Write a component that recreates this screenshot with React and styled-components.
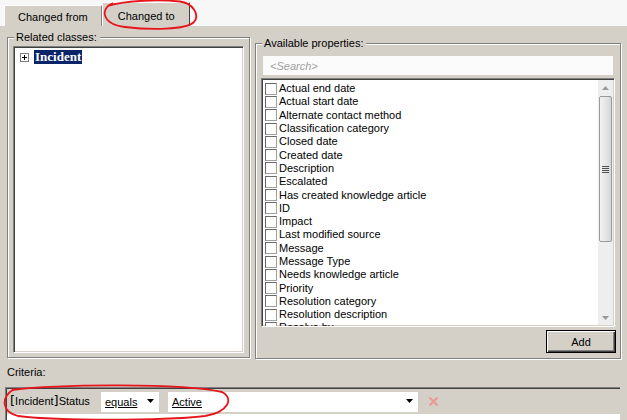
import styled, { createGlobalStyle } from "styled-components"

const GlobalStyle = createGlobalStyle`
  html, body {
    margin: 0;
    padding: 0;
    background: #ffffff;
  }
  body {
    font-family: "Liberation Sans", Arial, sans-serif;
    font-size: 11px;
    color: #000;
  }
`

const properties = [
  "Actual end date",
  "Actual start date",
  "Alternate contact method",
  "Classification category",
  "Closed date",
  "Created date",
  "Description",
  "Escalated",
  "Has created knowledge article",
  "ID",
  "Impact",
  "Last modified source",
  "Message",
  "Message Type",
  "Needs knowledge article",
  "Priority",
  "Resolution category",
  "Resolution description",
  "Resolve by",
]

const DropArrow = () => (
  <svg width="8" height="5" viewBox="0 0 8 5">
    <path d="M0 0 H7 L3.5 4 Z" fill="#000" />
  </svg>
)

const App = () => {
  return (
    <Wrapper>
      <GlobalStyle />
      <TabStrip>
        <Tab>Changed from</Tab>
        <Tab $active>Changed to</Tab>
      </TabStrip>

      <Panel>
        <TopRow>
          <GroupBox $width={243} $height={321} $top={11}>
            <Legend>Related classes:</Legend>
            <Sunken $grow>
              <TreeRow>
                <Expander>
                  <svg width="7" height="7" viewBox="0 0 7 7">
                    <path d="M1 3.5 H6 M3.5 1 V6" stroke="#000" strokeWidth="1" />
                  </svg>
                </Expander>
                <Selected>Incident</Selected>
              </TreeRow>
            </Sunken>
          </GroupBox>

          <GroupBox $width={366} $height={316} $top={17}>
            <Legend>Available properties:</Legend>
            <SearchBox>&lt;Search&gt;</SearchBox>
            <Sunken $height={249} $row>
              <PropList>
                {properties.map((name) => (
                  <PropRow key={name}>
                    <Check />
                    <span>{name}</span>
                  </PropRow>
                ))}
              </PropList>
              <ScrollBar>
                <ScrollArrow>
                  <svg width="7" height="4" viewBox="0 0 7 4">
                    <path d="M0 4 H7 L3.5 0 Z" fill="#9a9a9a" />
                  </svg>
                </ScrollArrow>
                <Thumb>
                  <Grip />
                </Thumb>
                <ScrollTrack />
                <ScrollArrow>
                  <svg width="7" height="4" viewBox="0 0 7 4">
                    <path d="M0 0 H7 L3.5 4 Z" fill="#9a9a9a" />
                  </svg>
                </ScrollArrow>
              </ScrollBar>
            </Sunken>
            <ButtonRow>
              <Button>Add</Button>
            </ButtonRow>
          </GroupBox>
        </TopRow>

        <CriteriaLabel>Criteria:</CriteriaLabel>

        <CriteriaBox>
          <CriteriaRow>
            <FieldName>
              <Bracket>[</Bracket>Incident<Bracket>]</Bracket>Status
            </FieldName>
            <Combo $width={58}>
              <ComboText>equals</ComboText>
              <DropArrow />
            </Combo>
            <Combo $width={250}>
              <ComboText>Active</ComboText>
              <DropArrow />
            </Combo>
            <RemoveIcon>
              <svg width="11" height="11" viewBox="0 0 11 11">
                <path d="M1.5 1.5 L9.5 9.5 M9.5 1.5 L1.5 9.5" stroke="#eb9a9a" strokeWidth="2.2" />
              </svg>
            </RemoveIcon>
          </CriteriaRow>
        </CriteriaBox>
      </Panel>

      <Annotations width="627" height="420" viewBox="0 0 627 420">
        <path
          d="M113 3 C100 8, 101 24, 125 27 C150 30, 186 30, 194 22 C200 15, 193 3, 180 1.5 C160 -0.5, 126 0, 108 6"
          fill="none"
          stroke="#e8141b"
          strokeWidth="1.8"
        />
        <path
          d="M12 390 C60 384, 182 383, 222 392 C234 398, 229 412, 205 416 C160 421, 60 421, 18 416 C2 412, 0 398, 14 389"
          fill="none"
          stroke="#e8141b"
          strokeWidth="1.8"
        />
      </Annotations>
    </Wrapper>
  )
}
export default App

const Wrapper = styled.div`
  position: relative;
  width: 627px;
  height: 420px;
  overflow: hidden;
  display: flex;
  flex-direction: column;
  background: #ffffff;
`

const TabStrip = styled.div`
  height: 26px;
  background: #f7f7f7;
  display: flex;
  align-items: flex-end;
  padding-left: 4px;
`

const Tab = styled.div`
  box-sizing: border-box;
  height: ${(p) => (p.$active ? "24px" : "21px")};
  padding: ${(p) => (p.$active ? "2px 14px 0 15px" : "1px 13px 0 13px")};
  display: flex;
  align-items: center;
  background: #d4d0c8;
  border-top: 1px solid #ffffff;
  border-left: 1px solid #ffffff;
  border-right: 1px solid ${(p) => (p.$active ? "#404040" : "#808080")};
  color: #000;
`

const Panel = styled.div`
  flex: 1;
  width: 623px;
  background: #d4d0c8;
  border-right: 2px solid #5a5a5a;
  display: flex;
  flex-direction: column;
  padding-left: 7px;
  box-sizing: content-box;
`

const TopRow = styled.div`
  display: flex;
  align-items: flex-start;
  gap: 5px;
`

const GroupBox = styled.div`
  position: relative;
  box-sizing: border-box;
  width: ${(p) => p.$width}px;
  height: ${(p) => p.$height}px;
  margin-top: ${(p) => p.$top}px;
  border: 1px solid #808080;
  box-shadow: inset 1px 1px 0 #ffffff, 1px 1px 0 #ffffff;
  padding: 8px 5px 4px 5px;
  display: flex;
  flex-direction: column;
`

const Legend = styled.span`
  position: absolute;
  top: -7px;
  left: 6px;
  padding: 0 3px 0 2px;
  background: #d4d0c8;
  line-height: 13px;
  color: #000;
`

const Sunken = styled.div`
  box-sizing: border-box;
  ${(p) => (p.$grow ? "flex: 1;" : "")}
  ${(p) => (p.$height ? `height: ${p.$height}px;` : "")}
  display: flex;
  flex-direction: ${(p) => (p.$row ? "row" : "column")};
  background: #ffffff;
  border: 1px solid;
  border-color: #808080 #ffffff #ffffff #808080;
  box-shadow: inset 1px 1px 0 #404040, inset -1px -1px 0 #d4d0c8;
  padding: 2px;
  overflow: hidden;
`

const TreeRow = styled.div`
  display: flex;
  align-items: center;
  gap: 5px;
  padding: 1px 0 0 4px;
`

const Expander = styled.div`
  box-sizing: border-box;
  width: 9px;
  height: 9px;
  border: 1px solid #808080;
  background: #fff;
  display: flex;
  align-items: center;
  justify-content: center;
`

const Selected = styled.span`
  background: #0a246a;
  color: #ffffff;
  font-weight: bold;
  font-family: "Liberation Serif", "DejaVu Serif", serif;
  font-size: 13px;
  line-height: 14px;
  padding: 0 1px;
`

const SearchBox = styled.div`
  box-sizing: border-box;
  height: 19px;
  margin: 4px 2px 3px 2px;
  background: #fbfbfb;
  color: #a0a0a0;
  font-style: italic;
  display: flex;
  align-items: center;
  padding-left: 7px;
`

const PropList = styled.div`
  flex: 1;
  display: flex;
  flex-direction: column;
  padding-top: 1px;
  padding-left: 1px;
`

const PropRow = styled.div`
  height: 13.3px;
  flex-shrink: 0;
  display: flex;
  align-items: center;
  gap: 2px;
  white-space: nowrap;
  line-height: 13px;
`

const Check = styled.span`
  box-sizing: border-box;
  width: 12px;
  height: 12px;
  flex-shrink: 0;
  background: #ffffff;
  border: 1px solid;
  border-color: #6a6a6a #a0a0a0 #a0a0a0 #6a6a6a;
`

const ScrollBar = styled.div`
  width: 15px;
  display: flex;
  flex-direction: column;
  background: #eeeeee;
  margin: -1px -1px -1px 0;
`

const ScrollArrow = styled.div`
  height: 15px;
  display: flex;
  align-items: center;
  justify-content: center;
`

const Thumb = styled.div`
  box-sizing: border-box;
  height: 146px;
  margin: 1px 1px 0 1px;
  border: 1px solid #9a9a9a;
  border-radius: 2px;
  background: linear-gradient(90deg, #f2f2f2 0%, #e6e6e6 50%, #d6d6d6 100%);
  display: flex;
  align-items: center;
  justify-content: center;
`

const Grip = styled.div`
  width: 7px;
  height: 7px;
  background: repeating-linear-gradient(
    180deg,
    #505050 0px,
    #505050 1px,
    transparent 1px,
    transparent 2px
  );
`

const ScrollTrack = styled.div`
  flex: 1;
`

const ButtonRow = styled.div`
  display: flex;
  justify-content: flex-end;
  margin-top: 3px;
`

const Button = styled.button`
  box-sizing: border-box;
  width: 70px;
  height: 23px;
  margin-right: -1px;
  font-family: inherit;
  font-size: 11px;
  color: #000;
  background: #d4d0c8;
  border: 1px solid #000;
  box-shadow: inset 1px 1px 0 #ffffff, inset -1px -1px 0 #404040, inset -2px -2px 0 #808080;
  padding: 0;
`

const CriteriaLabel = styled.div`
  height: 28px;
  display: flex;
  align-items: center;
  padding-bottom: 3px;
  box-sizing: border-box;
`

const CriteriaBox = styled.div`
  flex: 1;
  margin-left: -2px;
  width: 615px;
  box-sizing: border-box;
  background: #ffffff;
  border-top: 1px solid #808080;
  border-left: 1px solid #808080;
  box-shadow: inset 1px 1px 0 #404040;
  padding: 1px 0 0 1px;
`

const CriteriaRow = styled.div`
  height: 25px;
  background: #d4d0c8;
  display: flex;
  align-items: center;
  padding-left: 3px;
`

const FieldName = styled.span`
  width: 91px;
  padding-bottom: 2px;
  font-size: 11px;
  color: #000;
`

const Bracket = styled.span`
  font-size: 13px;
  font-family: "DejaVu Sans", sans-serif;
`

const Combo = styled.div`
  box-sizing: border-box;
  width: ${(p) => p.$width}px;
  height: 20px;
  margin-right: 9px;
  background: #ffffff;
  display: flex;
  align-items: center;
  justify-content: space-between;
  padding: 0 4px 0 4px;
`

const ComboText = styled.span`
  text-decoration: underline;
  color: #000;
`

const RemoveIcon = styled.div`
  display: flex;
  align-items: center;
  margin-left: 1px;
`

const Annotations = styled.svg`
  position: absolute;
  left: 0;
  top: 0;
  pointer-events: none;
`
